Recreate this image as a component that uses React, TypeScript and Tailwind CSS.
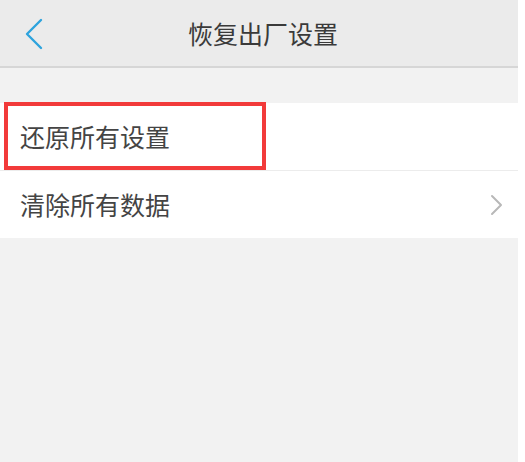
import React from "react";

export default function App() {
  return (
    <div
      className="w-[525px] h-[462px] bg-white flex"
      style={{ fontFamily: '"Noto Sans CJK SC", "Noto Sans", sans-serif' }}
    >
      <div className="w-[518px] h-full bg-[#f2f2f2] flex flex-col">
        <div className="h-[66px] bg-[#ebebeb] relative flex items-center justify-center border-b-2 border-[#d6d6d6] box-content">
          <svg
            className="absolute left-[24px] top-[18px]"
            width="20"
            height="32"
            viewBox="0 0 20 32"
            fill="none"
          >
            <path d="M17 2 L3 16 L17 30" stroke="#2ea3dd" strokeWidth="2.4" strokeLinecap="round" strokeLinejoin="round" />
          </svg>
          <span className="text-[25px] text-[#3a3a3a] leading-none pl-[8px]">恢复出厂设置</span>
        </div>
        <div className="h-[35px]" />
        <div className="bg-white">
          <div className="h-[68px] relative flex items-center pl-[20px] text-[25px] text-[#444] border-b border-[#ececec]">
            <div className="absolute left-[4px] top-[-1px] w-[262px] h-[68px] border-4 border-[#f23a3a]" />
            <span className="leading-none">还原所有设置</span>
          </div>
          <div className="h-[67px] flex items-center justify-between pl-[20px] pr-[14px] text-[25px] text-[#444]">
            <span className="leading-none">清除所有数据</span>
            <svg width="14" height="22" viewBox="0 0 14 22" fill="none">
              <path d="M2 2 L11 11 L2 20" stroke="#b8b8b8" strokeWidth="2" strokeLinecap="round" strokeLinejoin="round" />
            </svg>
          </div>
        </div>
      </div>
    </div>
  );
}
